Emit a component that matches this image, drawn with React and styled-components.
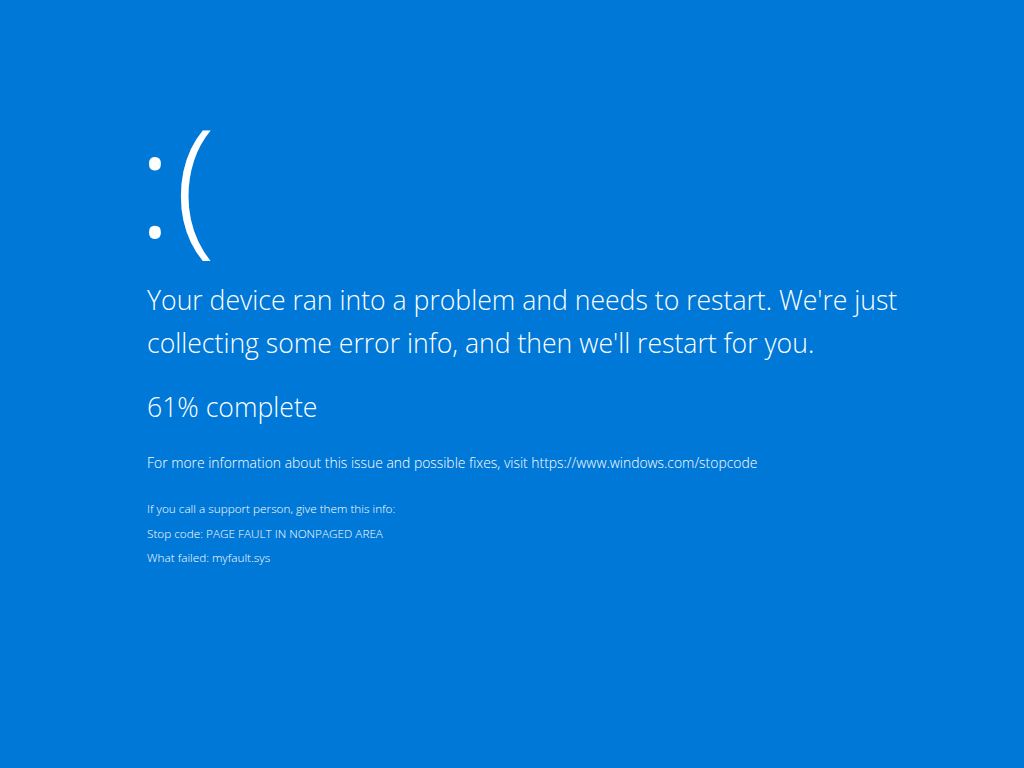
import React from 'react';
import styled, { createGlobalStyle } from 'styled-components';

const GlobalStyle = createGlobalStyle`
  html, body {
    margin: 0;
    padding: 0;
    background: #0078d7;
  }
`;

const Screen = styled.div`
  width: 1024px;
  height: 768px;
  background: #0078d7;
  color: #fff;
  font-family: 'Open Sans', 'Liberation Sans', sans-serif;
  font-weight: 300;
  padding: 89px 0 0 147px;
  box-sizing: border-box;
  display: flex;
  flex-direction: column;
  overflow: hidden;
`;

const Face = styled.div`
  font-size: 150px;
  line-height: 180px;
  height: 180px;
  margin: 0 0 10px -10px;
  letter-spacing: 2px;
`;

const Message = styled.p`
  margin: 0;
  font-size: 26.6px;
  line-height: 43px;
  width: 800px;
`;

const Progress = styled.p`
  margin: 21px 0 0;
  font-size: 26.6px;
  line-height: 43px;
`;

const Info = styled.p`
  margin: 22px 0 0;
  font-size: 13.9px;
  line-height: 24px;
`;

const Details = styled.div`
  margin-top: 21px;
  display: flex;
  flex-direction: column;
`;

const DetailLine = styled.span`
  font-size: 11.75px;
  line-height: 24.5px;
`;

export default function App() {
  return (
    <Screen>
      <GlobalStyle />
      <Face>:(</Face>
      <Message>
        Your device ran into a problem and needs to restart. We're just collecting some error info, and then we'll
        restart for you.
      </Message>
      <Progress>61% complete</Progress>
      <Info>For more information about this issue and possible fixes, visit https://www.windows.com/stopcode</Info>
      <Details>
        <DetailLine>If you call a support person, give them this info:</DetailLine>
        <DetailLine>Stop code: PAGE FAULT IN NONPAGED AREA</DetailLine>
        <DetailLine>What failed: myfault.sys</DetailLine>
      </Details>
    </Screen>
  );
}
